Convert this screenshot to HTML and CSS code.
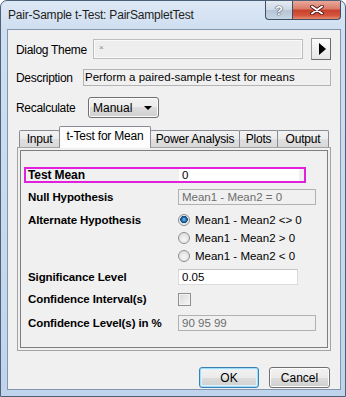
FILE: index.html
```html
<!DOCTYPE html>
<html lang="en">
<head>
  <meta charset="UTF-8" />
  <meta name="viewport" content="width=device-width, initial-scale=1.0" />
  <title>Pair-Sample t-Test: PairSampletTest</title>
  <link rel="stylesheet" href="styles.css">
</head>
<body>
  <div class="window">
    <div class="titlebar">
      <div class="title">Pair-Sample t-Test: PairSampletTest</div>
      <div class="caption">
        <div class="help">?</div>
        <div class="close">
          <svg width="14" height="10" viewBox="0 0 14 10">
            <path d="M2 1.5 L12 8.5 M12 1.5 L2 8.5" stroke="#4a1010" stroke-width="3.6" stroke-linecap="round" />
            <path d="M2 1.5 L12 8.5 M12 1.5 L2 8.5" stroke="#ffffff" stroke-width="2" stroke-linecap="round" />
          </svg>
        </div>
      </div>
    </div>

    <div class="client">
      <div class="toprow theme-row">
        <span class="toplabel theme-label">Dialog Theme</span>
        <div class="theme-box">×</div>
        <button class="arrow-btn"><span class="tri-right"></span></button>
      </div>
      <div class="toprow desc-row">
        <span class="toplabel desc-label">Description</span>
        <div class="desc-box">Perform a paired-sample t-test for means</div>
      </div>
      <div class="toprow recalc-row">
        <span class="toplabel recalc-label">Recalculate</span>
        <div class="combo">Manual<span class="tri-down"></span></div>
      </div>

      <div class="tabs">
        <div class="tab tab-input">Input</div>
        <div class="tab tab-mean active">t-Test for Mean</div>
        <div class="tab tab-power">Power Analysis</div>
        <div class="tab tab-plots">Plots</div>
        <div class="tab tab-output">Output</div>
      </div>
      <div class="panel">
        <div class="group">
          <div class="frow hl">
            <span class="flabel">Test Mean</span>
            <div class="field white mean-input">0</div>
          </div>
          <div class="frow null-row">
            <span class="flabel">Null Hypothesis</span>
            <div class="field disabled wide">Mean1 - Mean2 = 0</div>
          </div>
          <div class="alt-row">
            <span class="flabel alt-label">Alternate Hypothesis</span>
            <div class="options">
              <div class="opt"><span class="radio on"></span>Mean1 - Mean2 &lt;&gt; 0</div>
              <div class="opt"><span class="radio"></span>Mean1 - Mean2 &gt; 0</div>
              <div class="opt"><span class="radio"></span>Mean1 - Mean2 &lt; 0</div>
            </div>
          </div>
          <div class="frow sig-row">
            <span class="flabel">Significance Level</span>
            <div class="field white narrow">0.05</div>
          </div>
          <div class="frow ci-row">
            <span class="flabel">Confidence Interval(s)</span>
            <span class="check"></span>
          </div>
          <div class="frow cl-row">
            <span class="flabel">Confidence Level(s) in %</span>
            <div class="field disabled wide">90 95 99</div>
          </div>
        </div>
      </div>

      <div class="buttons">
        <button class="btn ok">OK</button>
        <button class="btn cancel">Cancel</button>
      </div>
    </div>
  </div>
</body>
</html>
```

FILE: styles.css
```css
body {
  margin: 0;
  width: 346px;
  height: 397px;
  overflow: hidden;
  background: #ffffff;
  font-family: "Liberation Sans", Arial, sans-serif;
  font-size: 11px;
  color: #000;
}
.window {
  box-sizing: border-box;
  height: 397px;
  border: 1px solid #4f6178;
  border-radius: 7px 7px 0 0;
  background: linear-gradient(to bottom, #dde8f5 0, #cfdff1 28px, #bfd4ec 100%);
  padding: 0 4px 6px 6px;
  display: flex;
  flex-direction: column;
}

/* title bar */
.titlebar {
  height: 28px;
  display: flex;
  flex-shrink: 0;
}
.title {
  flex: 1;
  padding: 7px 0 0 1px;
  font-size: 12px;
  line-height: 15px;
  letter-spacing: -0.2px;
  color: #1e1e1e;
}
.caption {
  display: flex;
  height: 19px;
}
.help, .close {
  box-sizing: border-box;
  height: 19px;
  border: 1px solid #3f4f64;
  border-top: none;
  display: flex;
  align-items: center;
  justify-content: center;
}
.help {
  width: 27px;
  border-right: none;
  border-radius: 0 0 0 4px;
  background: linear-gradient(to bottom, #e4ebf3 0, #cdd8e5 50%, #b6c5d6 50%, #c6d4e3 100%);
  color: #fff;
  font-size: 13px;
  font-weight: bold;
  text-shadow: 0 0 1px #3a4656, 0 0 1px #3a4656, 0 0 1px #3a4656;
}
.close {
  width: 49px;
  border-radius: 0 0 4px 0;
  background: linear-gradient(to bottom, #e9a99b 0, #d97a68 45%, #c8402b 50%, #d4553d 80%, #e88a6f 100%);
}

/* client area */
.client {
  flex: 1;
  border: 1px solid #8496ad;
  background: #f0f0f0;
  padding: 8px 0 0 8px;
  display: flex;
  flex-direction: column;
}
.toprow {
  display: flex;
  align-items: center;
}
.toplabel {
  box-sizing: border-box;
  flex-shrink: 0;
  padding-top: 1px;
}
.theme-row { height: 22px; }
.theme-label { width: 77px; font-size: 12px; letter-spacing: -0.3px; }
.theme-box {
  box-sizing: border-box;
  width: 210px;
  height: 20px;
  border: 1px solid #bdbdbd;
  box-shadow: inset 0 0 0 1px #fafafa;
  background: #eeeeee;
  color: #888;
  font-size: 8px;
  padding: 3px 0 0 5px;
}
.arrow-btn {
  box-sizing: border-box;
  width: 20px;
  height: 22px;
  margin-left: 8px;
  padding: 0;
  border: 1px solid #9a9a9a;
  border-right-color: #6a6a6a;
  border-bottom-color: #6a6a6a;
  background: linear-gradient(to bottom, #fbfbfb, #e6e6e6);
  display: flex;
  align-items: center;
  justify-content: center;
}
.tri-right {
  width: 0;
  height: 0;
  border-top: 6px solid transparent;
  border-bottom: 6px solid transparent;
  border-left: 7px solid #000;
  margin-left: 2px;
}
.desc-row { height: 17px; margin-top: 9px; }
.desc-label { width: 67px; font-size: 12px; letter-spacing: -0.3px; }
.desc-box {
  box-sizing: border-box;
  width: 248px;
  height: 17px;
  border: 1px solid #b4b4b4;
  background: #f0f0f0;
  font-size: 11.5px;
  line-height: 15px;
  padding-left: 1px;
}
.recalc-row { height: 21px; margin-top: 11px; }
.recalc-label { width: 72px; font-size: 12px; letter-spacing: -0.3px; }
.combo {
  box-sizing: border-box;
  width: 71px;
  height: 21px;
  border: 1px solid #707070;
  border-radius: 3px;
  background: linear-gradient(to bottom, #f2f2f2 0, #ebebeb 50%, #dddddd 50%, #cfcfcf 100%);
  box-shadow: inset 0 0 0 1px #fbfbfb;
  display: flex;
  align-items: center;
  padding: 1px 0 0 4px;
  font-size: 12px;
}
.tri-down {
  width: 0;
  height: 0;
  border-left: 4px solid transparent;
  border-right: 4px solid transparent;
  border-top: 4px solid #000;
  margin-left: auto;
  margin-right: 6px;
}

/* tabs */
.tabs {
  display: flex;
  align-items: flex-end;
  height: 21px;
  margin-top: 8px;
  margin-left: 3px;
  position: relative;
  z-index: 1;
}
.tab {
  box-sizing: border-box;
  height: 17px;
  margin-left: -1px;
  border: 1px solid #898c95;
  border-bottom: none;
  border-radius: 2px 2px 0 0;
  background: linear-gradient(to bottom, #f2f2f2 0, #ebebeb 50%, #dfdfdf 50%, #d9d9d9 100%);
  font-size: 12px;
  letter-spacing: -0.2px;
  text-align: center;
  line-height: 16px;
}
.tab-input { width: 41px; margin-left: 0; }
.tab-mean { width: 92px; }
.tab-power { width: 90px; }
.tab-plots { width: 39px; }
.tab-output { width: 52px; }
.tab.active {
  height: 22px;
  margin-bottom: -1px;
  background: #fcfcfc;
  line-height: 19px;
}
.panel {
  box-sizing: border-box;
  width: 314px;
  height: 204px;
  margin-left: 1px;
  border: 1px solid #a4a4a4;
  padding: 2px;
}
.group {
  box-sizing: border-box;
  height: 100%;
  border: 1px solid #7e7e7e;
  padding: 16px 0 0 3px;
}

/* form rows */
.frow {
  display: flex;
  align-items: center;
  height: 16px;
}
.flabel {
  box-sizing: border-box;
  flex-shrink: 0;
  width: 154px;
  padding-left: 4px;
  font-weight: bold;
  font-size: 11.5px;
  letter-spacing: -0.1px;
}
.hl {
  box-sizing: border-box;
  width: 282px;
  border: 2px solid #e020dc;
}
.hl .flabel {
  width: 152px;
  padding-left: 2px;
  font-size: 12px;
}
.field {
  box-sizing: border-box;
  height: 16px;
  font-size: 11.5px;
  line-height: 14px;
  padding-left: 3px;
}
.white {
  background: #fff;
  border: 1px solid #dcdcdc;
  border-top-color: #c4c4c4;
}
.mean-input {
  width: 120px;
  height: 12px;
  margin-left: 1px;
  border: none;
  line-height: 12px;
}
.disabled {
  background: #f0f0f0;
  border: 1px solid #b1b1b1;
  color: #6d6d6d;
}
.wide { width: 138px; }
.narrow { width: 120px; }
.null-row { margin-top: 6px; }
.alt-row {
  display: flex;
  margin-top: 6px;
}
.alt-label { line-height: 18px; }
.opt {
  display: flex;
  align-items: center;
  height: 18px;
  font-size: 11.5px;
}
.radio {
  box-sizing: border-box;
  width: 12px;
  height: 12px;
  margin-right: 5px;
  border: 1px solid #8f8f8f;
  border-radius: 50%;
  background: radial-gradient(circle at 50% 60%, #f8f8f8 0, #e2e2e2 5px);
}
.radio.on {
  background: radial-gradient(circle at 50% 45%, #7cc4ee 0, #2a77b8 2px, #133f6e 3.5px, #dfe7ee 4px, #f5f5f5 6px);
}
.sig-row { margin-top: 4px; }
.ci-row { margin-top: 6px; }
.check {
  box-sizing: border-box;
  width: 13px;
  height: 13px;
  border: 1px solid #8f8f8f;
  box-shadow: inset 0 0 0 1px #f4f4f4;
  background: linear-gradient(135deg, #d9d9d9, #f6f6f6);
}
.cl-row { margin-top: 8px; }

/* bottom buttons */
.buttons {
  display: flex;
  justify-content: flex-end;
  gap: 10px;
  margin-top: 16px;
  padding-right: 10px;
}
.btn {
  box-sizing: border-box;
  height: 21px;
  padding: 0;
  border: 1px solid #707070;
  border-radius: 3px;
  background: linear-gradient(to bottom, #f2f2f2 0, #ebebeb 50%, #dddddd 50%, #cfcfcf 100%);
  box-shadow: inset 0 0 0 1px #fcfcfc;
  font-family: "Liberation Sans", Arial, sans-serif;
  font-size: 12px;
  color: #000;
}
.ok {
  width: 60px;
  border-color: #3c7fb1;
  box-shadow: inset 0 0 0 1px #9fdcf9, inset 0 0 0 2px #dff3fc;
}
.cancel { width: 61px; }
```
